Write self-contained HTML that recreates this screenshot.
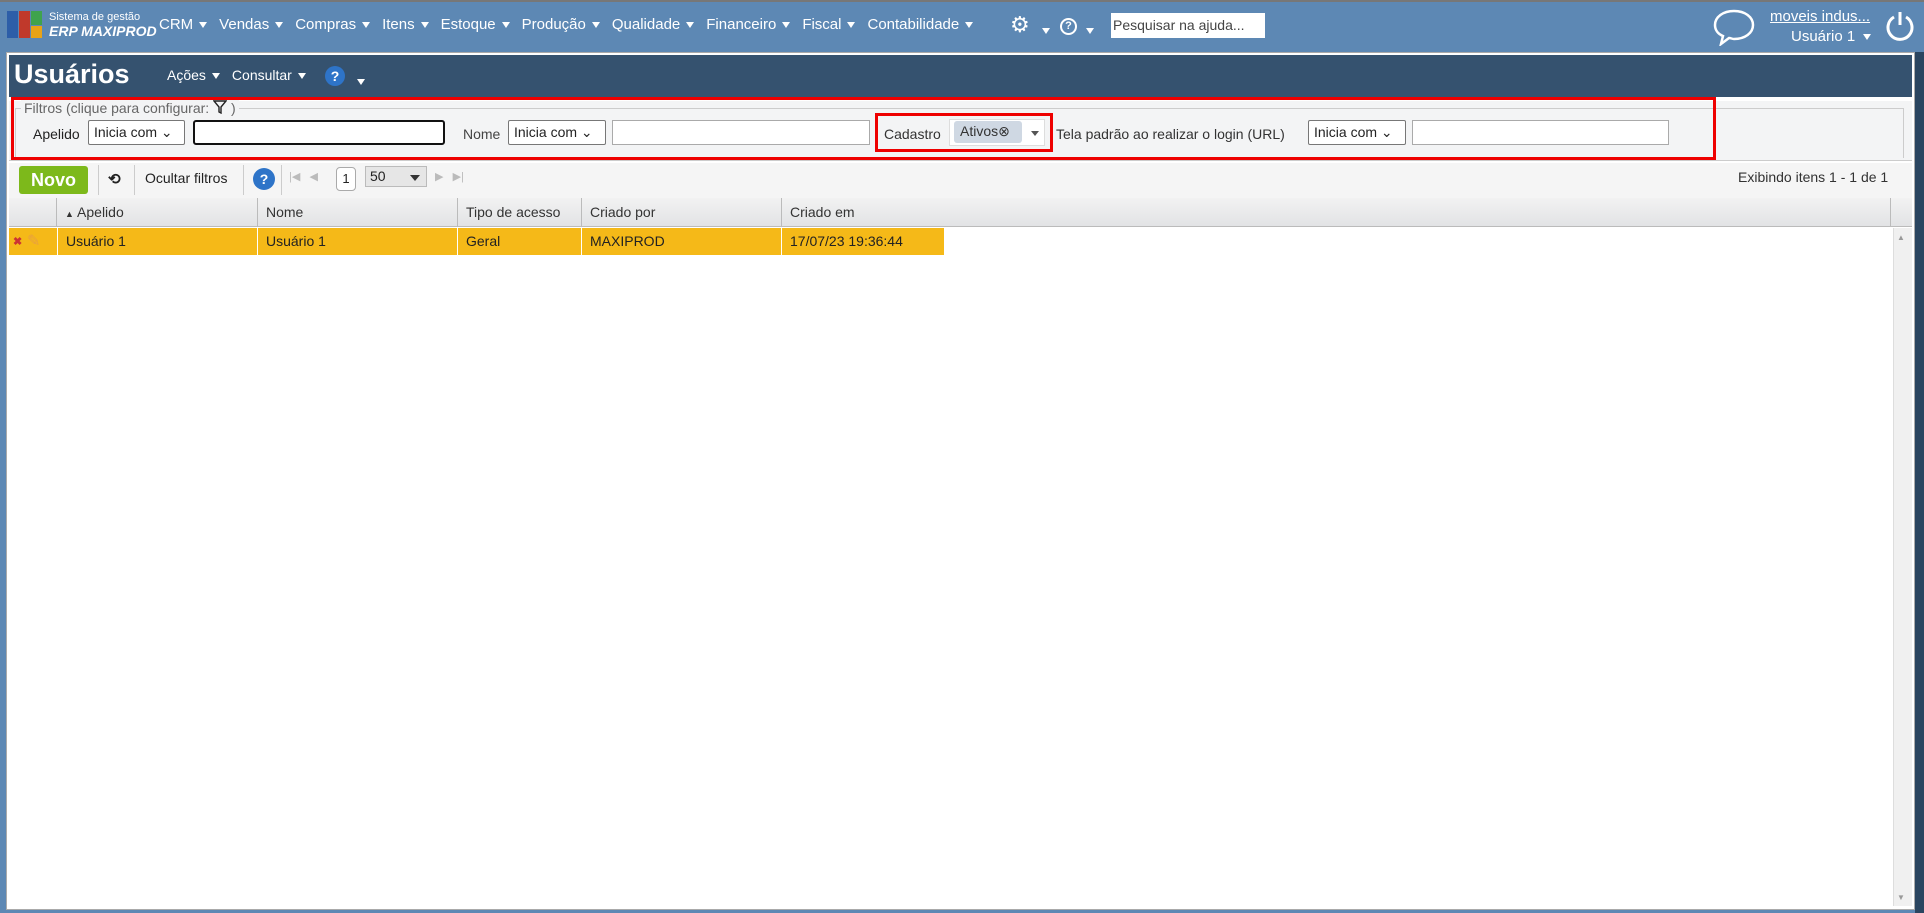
<!DOCTYPE html>
<html><head><meta charset="utf-8"><style>
*{box-sizing:border-box;margin:0;padding:0}
body{width:1924px;height:913px;background:#5d88b4;font-family:"Liberation Sans",sans-serif;font-size:14px;color:#222;position:relative;overflow:hidden}
.abs{position:absolute}
.menu{position:absolute;top:16px;color:#fff;font-size:15px;white-space:nowrap}
.tri{display:inline-block;width:0;height:0;border-left:4px solid transparent;border-right:4px solid transparent;border-top:6px solid #fff;vertical-align:middle;margin-left:6px;margin-right:12px}
.page{position:absolute;left:6px;top:52px;width:1909px;height:858px;background:#fff;border:1px solid #aaa}
.hdr{position:absolute;left:2px;top:2px;width:1903px;height:42px;background:#35526f}
.sel{position:absolute;height:25px;border:1px solid #777;border-radius:2px;background:#fff;font-size:14px;padding:3px 5px}
.inp{position:absolute;height:25px;border:1px solid #aaa;background:#fff}
.th{position:absolute;top:0;height:28px;line-height:28px;padding-left:8px;border-right:1px solid #bbb;color:#333}
.td{position:absolute;top:0;height:27px;line-height:27px;padding-left:8px;border-right:1px solid #fff;color:#222}
</style></head><body>
<div class="abs" style="left:1915px;top:52px;width:9px;height:861px;background:#2a4560"></div>
<div class="abs" style="left:0;top:0;width:1924px;height:2px;background:#777"></div>
<div class="abs" style="left:7px;top:11px;width:36px;height:27px">
<div class="abs" style="left:0;top:0;width:11px;height:27px;background:#2d5ea8"></div>
<div class="abs" style="left:12px;top:0;width:11px;height:27px;background:#c0392b"></div>
<div class="abs" style="left:24px;top:0;width:11px;height:14px;background:#3fa34d"></div>
<div class="abs" style="left:24px;top:15px;width:11px;height:12px;background:#e8a317"></div>
</div>
<div class="abs" style="left:49px;top:11px;color:#fff;font-size:11px;line-height:12px">Sistema de gestão</div>
<div class="abs" style="left:49px;top:23px;color:#fff;font-size:14px;font-weight:bold;font-style:italic">ERP MAXIPROD</div>
<div class="menu" style="left:159px">CRM<span class="tri"></span>Vendas<span class="tri"></span>Compras<span class="tri"></span>Itens<span class="tri"></span>Estoque<span class="tri"></span>Produção<span class="tri"></span>Qualidade<span class="tri"></span>Financeiro<span class="tri"></span>Fiscal<span class="tri"></span>Contabilidade<span class="tri"></span></div>
<div class="abs" style="left:1010px;top:14px;color:#fff;font-size:22px;line-height:22px">⚙</div>
<div class="abs" style="left:1042px;top:22px"><span class="tri" style="margin:0"></span></div>
<div class="abs" style="left:1060px;top:18px;width:17px;height:17px;border:2px solid #fff;border-radius:50%;color:#fff;font-size:11px;text-align:center;line-height:13px;font-weight:bold">?</div>
<div class="abs" style="left:1086px;top:22px"><span class="tri" style="margin:0"></span></div>
<div class="abs" style="left:1111px;top:13px;width:154px;height:25px;background:#fff;font-size:14px;padding:4px 2px;color:#444">Pesquisar na ajuda...</div>
<svg class="abs" style="left:1711px;top:8px" width="46" height="38" viewBox="0 0 46 38"><path d="M23 3C12 3 4 9 4 17c0 5 3 9 8 11l-2 8 8-6c2 0 3 1 5 1 11 0 19-6 19-14S34 3 23 3z" fill="none" stroke="#fff" stroke-width="2.5"/></svg>
<div class="abs" style="left:1770px;top:8px;color:#fff;font-size:15px;text-decoration:underline">moveis indus...</div>
<div class="abs" style="left:1791px;top:28px;color:#fff;font-size:15px">Usuário 1<span class="tri" style="margin-left:8px"></span></div>
<svg class="abs" style="left:1885px;top:10px" width="30" height="32" viewBox="0 0 30 32"><path d="M9 7A12 12 0 1 0 21 7" fill="none" stroke="#fff" stroke-width="3"/><path d="M15 2v13" stroke="#fff" stroke-width="3"/></svg>

<div class="page">
<div class="hdr">
<div class="abs" style="left:5px;top:4px;color:#fff;font-size:27px;font-weight:bold">Usuários</div>
<div class="abs" style="left:158px;top:12px;color:#fff;font-size:14px">Ações<span class="tri"></span>Consultar<span class="tri" style="margin-right:4px"></span></div>
<div class="abs" style="left:316px;top:11px;width:20px;height:20px;border-radius:50%;background:#2e74c8;color:#fff;font-weight:bold;text-align:center;line-height:20px;font-size:14px">?</div>
<div class="abs" style="left:348px;top:18px"><span class="tri" style="margin:0"></span></div>
</div>
<div class="abs" style="left:2px;top:48px;width:1903px;height:60px;background:#f3f4f5;border-bottom:1px solid #ccc"></div>
<div class="abs" style="left:8px;top:55px;width:1889px;height:50px;border:1px solid #ccc;border-bottom:none"></div>
<div class="abs" style="left:14px;top:47px;background:#f3f4f5;padding:0 3px;color:#666;font-size:14px">Filtros (clique para configurar: <svg width="14" height="14" viewBox="0 0 14 14" style="vertical-align:-1px"><path d="M1 1h12L8 7v6l-2-1V7z" fill="none" stroke="#222" stroke-width="1.4"/></svg> )</div>
<div class="abs" style="left:26px;top:73px">Apelido</div>
<div class="sel" style="left:81px;top:67px;width:97px">Inicia com ⌄</div>
<div class="inp" style="left:186px;top:67px;width:252px;border:2px solid #111;border-radius:3px"></div>
<div class="abs" style="left:456px;top:73px;color:#444">Nome</div>
<div class="sel" style="left:501px;top:67px;width:98px">Inicia com ⌄</div>
<div class="inp" style="left:605px;top:67px;width:258px"></div>
<div class="abs" style="left:877px;top:73px;color:#333">Cadastro</div>
<div class="abs" style="left:942px;top:66px;width:96px;height:27px;background:#fff;border:1px solid #ddd"></div>
<div class="abs" style="left:947px;top:68px;width:68px;height:22px;background:#cfd8e3;border-radius:3px;font-size:14px;padding:2px 6px;color:#333">Ativos⊗</div>
<div class="abs" style="left:1024px;top:78px;border-left:4px solid transparent;border-right:4px solid transparent;border-top:5px solid #555"></div>
<div class="abs" style="left:1049px;top:73px;color:#333">Tela padrão ao realizar o login (URL)</div>
<div class="sel" style="left:1301px;top:67px;width:98px">Inicia com ⌄</div>
<div class="inp" style="left:1405px;top:67px;width:257px"></div>
<div class="abs" style="left:4px;top:44px;width:1705px;height:63px;border:3px solid #e00"></div>
<div class="abs" style="left:868px;top:60px;width:178px;height:39px;border:3px solid #e00"></div>
<div class="abs" style="left:2px;top:110px;width:1903px;height:36px;background:#f5f5f5;border-bottom:1px solid #ccc"></div>
<div class="abs" style="left:12px;top:113px;width:69px;height:28px;background:#7db91b;border-radius:3px;color:#fff;font-weight:bold;font-size:18px;text-align:center;line-height:28px">Novo</div>
<div class="abs" style="left:91px;top:112px;width:1px;height:30px;background:#ccc"></div>
<div class="abs" style="left:101px;top:117px;font-weight:bold;font-size:15px">⟲</div>
<div class="abs" style="left:127px;top:112px;width:1px;height:30px;background:#ccc"></div>
<div class="abs" style="left:138px;top:117px">Ocultar filtros</div>
<div class="abs" style="left:236px;top:112px;width:1px;height:30px;background:#ccc"></div>
<div class="abs" style="left:246px;top:115px;width:22px;height:22px;border-radius:50%;background:#2e74c8;color:#fff;font-weight:bold;text-align:center;line-height:22px">?</div>
<div class="abs" style="left:274px;top:112px;width:1px;height:30px;background:#ccc"></div>
<div class="abs" style="left:282px;top:117px;color:#bbb;font-size:11px">|◀ &nbsp; ◀</div>
<div class="abs" style="left:329px;top:114px;width:20px;height:24px;border:1px solid #aaa;border-radius:4px;background:#fff;text-align:center;line-height:22px;font-size:13px">1</div>
<div class="abs" style="left:358px;top:113px;width:62px;height:21px;border:1px solid #bbb;background:#e6e6e6;padding:1px 4px;font-size:14px">50<span style="position:absolute;right:6px;top:8px;border-left:5px solid transparent;border-right:5px solid transparent;border-top:6px solid #333"></span></div>
<div class="abs" style="left:428px;top:117px;color:#bbb;font-size:11px">▶ &nbsp; ▶|</div>
<div class="abs" style="left:1731px;top:116px;color:#333">Exibindo itens 1 - 1 de 1</div>
<div class="abs" style="left:2px;top:145px;width:1903px;height:29px;background:linear-gradient(#f2f2f2,#e2e3e5);border-bottom:1px solid #bbb">
<div class="th" style="left:0;width:48px;padding:0"></div>
<div class="th" style="left:48px;width:201px"><span style="font-size:9px">▲</span> Apelido</div>
<div class="th" style="left:249px;width:200px">Nome</div>
<div class="th" style="left:449px;width:124px">Tipo de acesso</div>
<div class="th" style="left:573px;width:200px">Criado por</div>
<div class="th" style="left:773px;width:1109px">Criado em</div>
</div>
<div class="abs" style="left:2px;top:175px;width:935px;height:27px;background:#f5b918">
<div class="abs" style="left:4px;top:7px;color:#c33;font-size:11px;font-weight:bold">✖</div>
<div class="abs" style="left:18px;top:3px;color:#e8a040;font-size:16px">✎</div>
<div class="td" style="left:48px;width:201px;border-left:1px solid #fff">Usuário 1</div>
<div class="td" style="left:249px;width:200px">Usuário 1</div>
<div class="td" style="left:449px;width:124px">Geral</div>
<div class="td" style="left:573px;width:200px">MAXIPROD</div>
<div class="td" style="left:773px;width:162px;border:none">17/07/23 19:36:44</div>
</div>
<div class="abs" style="left:1886px;top:175px;width:19px;height:678px;background:#f0f0f0;border-left:1px solid #ddd"></div>
<div class="abs" style="left:1890px;top:180px;color:#999;font-size:8px">▲</div>
<div class="abs" style="left:1890px;top:840px;color:#999;font-size:8px">▼</div>
</div>
</body></html>
